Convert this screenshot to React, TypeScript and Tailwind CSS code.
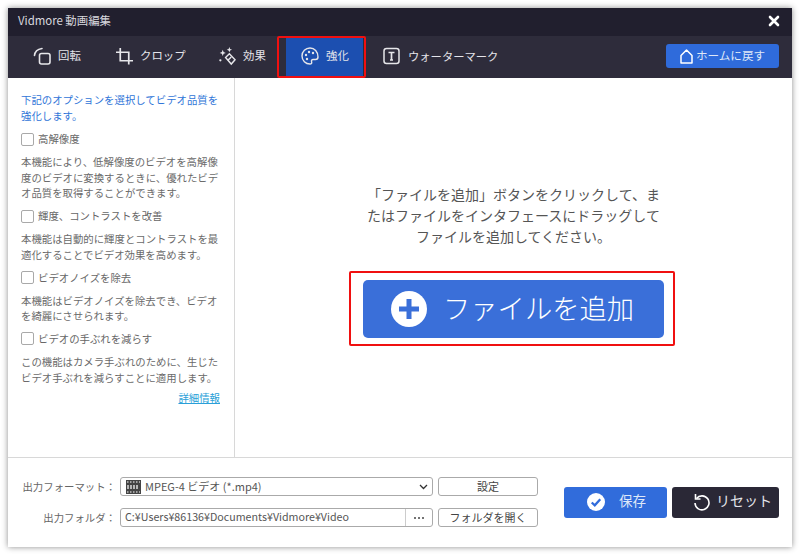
import React from "react";

function Tab({ icon, label, active, w, pl, size }: { icon: React.ReactNode; label: string; active?: boolean; w: string; pl: string; size?: string }) {
  return (
    <div className={`flex items-center gap-[7px] h-[39px] mt-[2px] pb-[3px] ${w} ${pl} ${active ? "bg-[#1c4fb0]" : ""}`}>
      {icon}
      <span className={`${size ?? "text-[11.4px]"} text-[#e4e4ea] whitespace-nowrap`}>{label}</span>
    </div>
  );
}

function Opt({ label, lines }: { label: string; lines: string[] }) {
  return (
    <div className="flex flex-col">
      <div className="flex items-center gap-[4px] h-[22px]">
        <span className="w-[13px] h-[13px] border border-[#a9a9a9] rounded-[2px] bg-white shrink-0" />
        <span className="text-[#666] text-[10.4px]">{label}</span>
      </div>
      <div className="mt-[4px] mb-[4px]">
        {lines.map((l) => (
          <div key={l} className="text-[10.4px] leading-[15.7px] text-[#6a6a6a] whitespace-nowrap">{l}</div>
        ))}
      </div>
    </div>
  );
}

export default function App() {
  return (
    <div className="w-[800px] h-[555px] bg-white pt-[8px] pl-[8px] font-['Noto_Sans_CJK_JP','Noto_Sans',sans-serif]">
      <div className="w-[784px] h-[539px] bg-white flex flex-col shadow-[0_0_6px_rgba(0,0,0,0.45)]">
        {/* title */}
        <div className="h-[28px] pb-[2px] bg-[#211f2e] flex items-center justify-between pl-[10px] pr-[12px] shrink-0">
          <span className="text-[11.4px] text-[#d8d8de]">Vidmore 動画編集</span>
          <svg width="12" height="12" viewBox="0 0 12 12"><path d="M2 2l8 8M10 2l-8 8" stroke="#fff" strokeWidth="2.6" strokeLinecap="round" /></svg>
        </div>
        {/* tabs */}
        <div className="relative h-[42px] bg-[#2e2c3b] flex items-start pl-[15px] shrink-0">
          <Tab
            w="w-[83px]"
            pl="pl-[10px]"
            label="回転"
            icon={
              <svg width="18" height="18" viewBox="0 0 18 18" fill="none" stroke="#e6e6ea" strokeWidth="1.6">
                <rect x="6.500" y="6.500" width="10.500" height="10.500" rx="2" />
                <path d="M1.500 8.500C1.800 5 4.500 2.200 9 1.500" strokeLinecap="round" />
              </svg>
            }
          />
          <Tab
            w="w-[100px]"
            pl="pl-[10px]"
            label="クロップ"
            icon={
              <svg width="17" height="17" viewBox="0 0 18 18" fill="none" stroke="#e6e6ea" strokeWidth="1.800">
                <path d="M0 4.500h13.500v13" />
                <path d="M4.500 0v13.500H18" />
              </svg>
            }
          />
          <Tab
            w="w-[74px]"
            pl="pl-[12px]"
            label="効果"
            icon={
              <svg width="18" height="21" viewBox="0 0 19 22" fill="none" stroke="#e6e6ea" strokeWidth="1.500">
                <path d="M8 12l4-4 6 6.500-4 4.500z" />
                <path d="M10.500 15l3.500-3.500" />
                <path d="M12 1l.8 2 2 .8-2 .8-.8 2-.8-2-2-.8 2-.8z" fill="#e6e6ea" strokeWidth="0" />
                <path d="M5 4l.9 2.300 2.300.9-2.300.9-.9 2.300-.9-2.300-2.300-.9 2.300-.9z" fill="#e6e6ea" strokeWidth="0" />
                <circle cx="2.500" cy="15" r="1.200" fill="#e6e6ea" strokeWidth="0" />
              </svg>
            }
          />
          <div className="w-[6px]" />
          <Tab
            w="w-[77px]"
            pl="pl-[15px]"
            active
            label="強化"
            icon={
              <svg width="18" height="18" viewBox="0 0 18 18" fill="none" stroke="#e6e6ea" strokeWidth="1.400">
                <path d="M9 1a8 8 0 1 0 0 16c1.500 0 2-1 1.600-2.100-.5-1.300.2-2.400 1.600-2.400h2.300c1.500 0 2.500-1 2.500-2.500C17 4.500 13.500 1 9 1z" />
                <circle cx="5" cy="8" r="1.200" fill="#e6e6ea" strokeWidth="0" />
                <circle cx="8" cy="5" r="1.200" fill="#e6e6ea" strokeWidth="0" />
                <circle cx="12" cy="6" r="1.200" fill="#e6e6ea" strokeWidth="0" />
                <circle cx="6" cy="12" r="1.200" fill="#e6e6ea" strokeWidth="0" />
              </svg>
            }
          />
          <Tab
            w="w-[156px]"
            pl="pl-[20px]"
            size="text-[11.3px]"
            label="ウォーターマーク"
            icon={
              <svg width="18" height="18" viewBox="0 0 18 18" fill="none" stroke="#e6e6ea" strokeWidth="1.500">
                <rect x="1" y="1.500" width="15" height="15" rx="2.500" />
                <path d="M5.500 5.500h6M8.500 5.500v7.500M7 13h3" strokeWidth="1.700" />
              </svg>
            }
          />
          <div className="flex-1" />
          <div className="mt-[8px] mr-[13px] w-[113px] h-[24px] bg-[#2f6bdb] rounded-[3px] flex items-center justify-center gap-[3px]">
            <svg width="13" height="15" viewBox="0 0 13 15" fill="none" stroke="#fff" strokeWidth="1.500">
              <path d="M6.500 1L12 6.500V14H1V6.500z" strokeLinejoin="round" />
            </svg>
            <span className="text-[11.6px] text-[#dfe8f8]">ホームに戻す</span>
          </div>
          {/* red highlight */}
          <div className="absolute left-[269px] top-0 w-[89px] h-[42px] border-[2px] border-[#f01010] rounded-[2px]" />
        </div>
        {/* body */}
        <div className="flex h-[380px] shrink-0 border-b border-[#d8d8d8]">
          <div className="w-[227px] border-r border-[#d8d8d8] pl-[13px] pt-[14px] shrink-0">
            <div className="text-[10.4px] leading-[16px] text-[#2f75d8] whitespace-nowrap">
              <div>下記のオプションを選択してビデオ品質を</div>
              <div>強化します。</div>
            </div>
            <div className="mt-[4px] flex flex-col">
              <Opt label="高解像度" lines={["本機能により、低解像度のビデオを高解像", "度のビデオに変換するときに、優れたビデ", "オ品質を取得することができます。"]} />
              <Opt label="輝度、コントラストを改善" lines={["本機能は自動的に輝度とコントラストを最", "適化することでビデオ効果を高めます。"]} />
              <Opt label="ビデオノイズを除去" lines={["本機能はビデオノイズを除去でき、ビデオ", "を綺麗にさせられます。"]} />
              <Opt label="ビデオの手ぶれを減らす" lines={["この機能はカメラ手ぶれのために、生じた", "ビデオ手ぶれを減らすことに適用します。"]} />
            </div>
            <div className="w-[199px] text-right text-[10.4px] leading-[14px] mt-[2px] text-[#2a9fd8] underline">詳細情報</div>
          </div>
          <div className="flex-1 flex flex-col items-center pt-[106px]">
            <div className="text-[14px] leading-[21px] text-[#555] text-center w-[300px]">
              「ファイルを追加」ボタンをクリックして、またはファイルをインタフェースにドラッグしてファイルを追加してください。
            </div>
            <div className="mt-[24px] mr-[3px] border-[2px] border-[#f01010] rounded-[2px] pl-[12px] pr-[9px] pt-[7px] pb-[6px]">
              <div className="w-[301px] h-[58px] bg-[#3a6fd9] rounded-[5px] flex items-center pl-[28px] gap-[16px] pb-[4px]">
                <div className="w-[36px] h-[36px] mt-[4px] rounded-full bg-white flex items-center justify-center">
                  <svg width="22" height="22" viewBox="0 0 22 22"><path d="M11 1v20M1 11h20" stroke="#3a6fd9" strokeWidth="5" /></svg>
                </div>
                <span className="text-[27.300px] text-white font-light whitespace-nowrap">ファイルを追加</span>
              </div>
            </div>
          </div>
        </div>
        {/* footer */}
        <div className="flex-1 flex items-center pl-[14px]">
          <div className="flex flex-col gap-[12px] mb-[1px]">
            <div className="flex items-center">
              <span className="w-[94px] text-right text-[10.4px] text-[#666] whitespace-nowrap">出力フォーマット：</span>
              <div className="ml-[4px] w-[313px] h-[19px] border border-[#aaa] rounded-[3px] flex items-center pl-[5px] pr-[4px]">
                <svg width="15" height="14" viewBox="0 0 15 14" className="shrink-0">
                  <rect width="15" height="14" fill="#444" />
                  <path d="M1 2h1.500M4 2h1.500M7 2h1.500M10 2h1.500M13 2h1M1 12h1.500M4 12h1.500M7 12h1.500M10 12h1.500M13 12h1" stroke="#fff" strokeWidth="1.200" />
                  <path d="M2 5v4M5 5v4M8 5v4M11 5v4" stroke="#ddd" strokeWidth="1.500" />
                </svg>
                <span className="ml-[4px] text-[11px] text-[#555]">MPEG-4 ビデオ (*.mp4)</span>
                <div className="flex-1" />
                <svg width="9" height="6" viewBox="0 0 9 6" fill="none" stroke="#333" strokeWidth="1.300"><path d="M1 1l3.500 3.500L8 1" /></svg>
              </div>
              <div className="ml-[5px] w-[100px] h-[19px] border border-[#aaa] rounded-[3px] flex items-center justify-center text-[11px] text-[#444]">設定</div>
            </div>
            <div className="flex items-center">
              <span className="w-[94px] text-right text-[10.4px] text-[#666] whitespace-nowrap">出力フォルダ：</span>
              <div className="ml-[4px] w-[313px] h-[19px] border border-[#aaa] rounded-[3px] flex items-center pl-[4px]">
                <span className="flex-1 text-[10.7px] text-[#555] whitespace-nowrap">C:¥Users¥86136¥Documents¥Vidmore¥Video</span>
                <div className="w-[27px] h-full border-l border-[#ccc] flex items-center justify-center gap-[2px]">
                  <span className="w-[2px] h-[2px] bg-[#444] rounded-full" />
                  <span className="w-[2px] h-[2px] bg-[#444] rounded-full" />
                  <span className="w-[2px] h-[2px] bg-[#444] rounded-full" />
                </div>
              </div>
              <div className="ml-[5px] w-[100px] h-[19px] border border-[#aaa] rounded-[3px] flex items-center justify-center text-[11px] text-[#444]">フォルダを開く</div>
            </div>
          </div>
          <div className="ml-[26px] mb-[1px] w-[103px] h-[31px] bg-[#316cdb] rounded-[3px] flex items-center pl-[23px]">
            <svg width="18" height="18" viewBox="0 0 19 19"><circle cx="9.500" cy="9.500" r="9.500" fill="#fff" /><path d="M5 10l3.200 3L14 6.500" stroke="#316cdb" strokeWidth="2.400" fill="none" /></svg>
            <span className="ml-[14px] mb-[3px] text-[13.500px] text-[#dfe8f8]">保存</span>
          </div>
          <div className="ml-[5px] mb-[1px] w-[107px] h-[31px] bg-[#2a2836] rounded-[3px] flex items-center pl-[21px]">
            <svg width="18" height="18" viewBox="0 0 17 18" fill="none" stroke="#fff" strokeWidth="1.600">
              <path d="M3 5.500A7 7 0 1 1 1.500 10" />
              <path d="M2 1v5h5" />
            </svg>
            <span className="ml-[5px] mb-[3px] text-[14px] text-[#e4e4ea]">リセット</span>
          </div>
        </div>
      </div>
    </div>
  );
}
